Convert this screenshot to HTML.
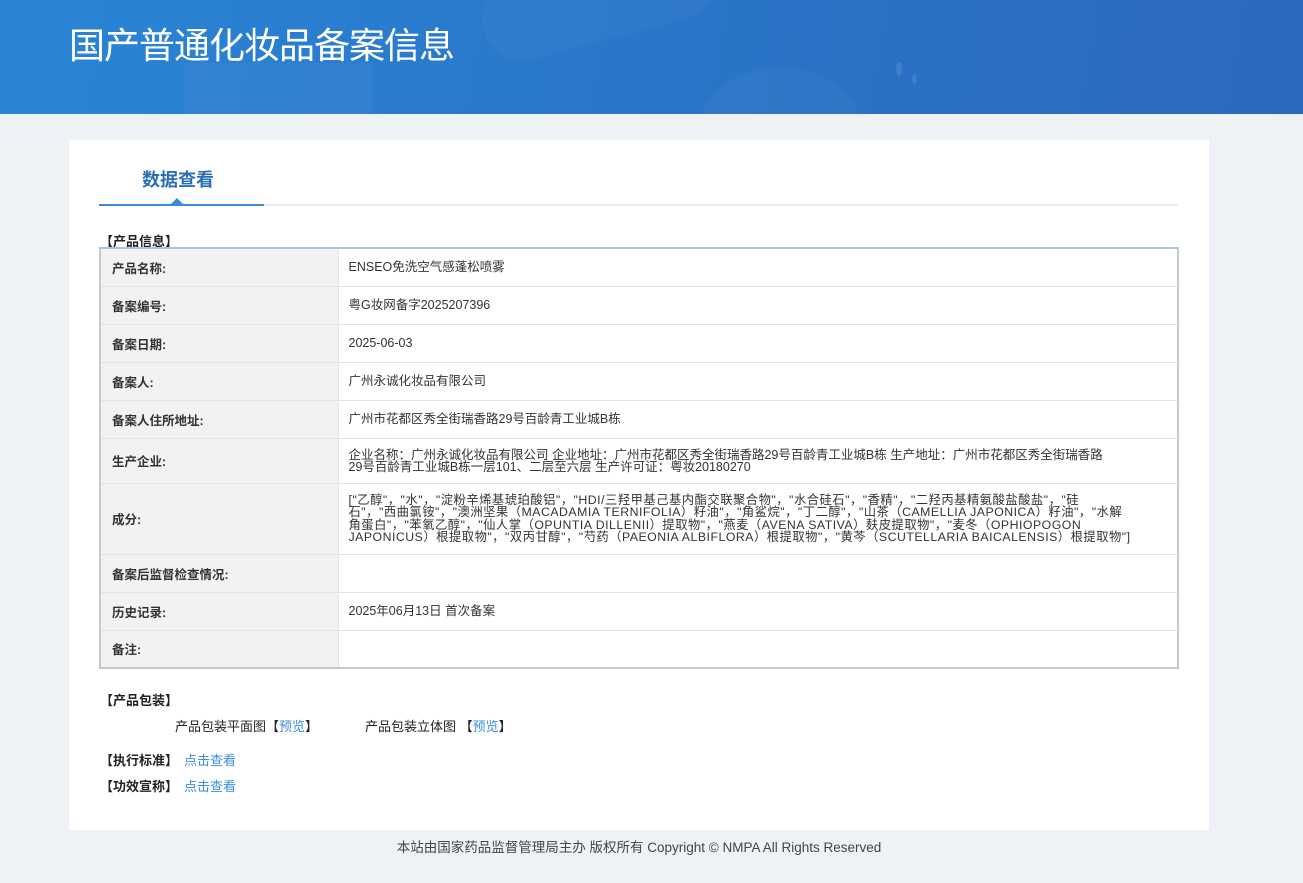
<!DOCTYPE html>
<html><head><meta charset="utf-8">
<style>
*{margin:0;padding:0;box-sizing:border-box}
body{width:1303px;height:883px;background:#eef1f5;font-family:"Liberation Sans","Noto Sans CJK SC",sans-serif;font-size:12px;color:#333;position:relative;overflow:hidden}
.hd{position:absolute;left:0;top:0;width:1303px;height:114px;background:linear-gradient(100deg,#2a86d4 0%,#2a78cc 40%,#2b69be 100%);overflow:hidden}
.hd .s1{position:absolute;left:184px;top:63px;width:188px;height:60px;background:#3f85d8;opacity:.45}
.hd .c1{position:absolute;left:480px;top:-40px;width:240px;height:80px;border-radius:40px;background:rgba(255,255,255,.03);transform:rotate(-15deg)}
.hd .c2{position:absolute;left:700px;top:68px;width:160px;height:120px;border-radius:50%;background:rgba(255,255,255,.03)}
.hd .d1{position:absolute;left:896px;top:62px;width:6px;height:14px;border-radius:50%;background:rgba(255,255,255,.1)}
.hd .d2{position:absolute;left:912px;top:74px;width:5px;height:10px;border-radius:50%;background:rgba(255,255,255,.1)}
.hd h1{position:absolute;left:69px;top:24px;font-size:36px;font-weight:normal;color:#fff;letter-spacing:-1px;line-height:44px;font-family:"Liberation Sans","Noto Sans CJK SC",sans-serif}
.panel{position:absolute;left:69px;top:140px;width:1140px;height:690px;background:#fff}
.tab{position:absolute;left:142px;top:166px;font-size:18px;font-weight:bold;color:#2a6eb3}
.line{position:absolute;left:99px;top:204px;width:1079px;height:2px;background:#e8ebef}
.blue{position:absolute;left:99px;top:204px;width:165px;height:2px;background:#3b8cd6}
.tri{position:absolute;left:171px;top:198px;width:0;height:0;border-left:6px solid transparent;border-right:6px solid transparent;border-bottom:6px solid #3b8cd6}
.sec{position:absolute;font-weight:bold;color:#222;font-size:13px}
table{position:absolute;left:99px;top:247px;width:1080px;border-collapse:collapse;border:2px solid #c8c8c8;border-top-color:#a9c2e6}
td{border:1px solid #e3e3e3;font-size:12.5px;vertical-align:middle}
td.l{width:238px;background:#f2f2f2;font-weight:bold;padding-left:11px;color:#333}
td.v{padding:0 20px 0 10px;color:#333;line-height:12px;white-space:nowrap}
td.ing{line-height:12.5px;font-size:12.3px;letter-spacing:0.5px}
a{color:#3a8ee0;text-decoration:none}
.foot{position:absolute;top:836px;left:0;width:1278px;text-align:center;font-size:13.5px;color:#444}
.pk{position:absolute;font-size:13px;color:#222}
</style></head><body>
<div class="hd"><div class="c1"></div><div class="s1"></div><div class="c2"></div><div class="d1"></div><div class="d2"></div><h1>国产普通化妆品备案信息</h1></div>
<div class="panel"></div>
<div class="tab">数据查看</div>
<div class="line"></div><div class="blue"></div><div class="tri"></div>
<div class="sec" style="left:100px;top:231px">【产品信息】</div>
<table>
<tr style="height:38px"><td class="l">产品名称:</td><td class="v">ENSEO免洗空气感蓬松喷雾</td></tr>
<tr style="height:38px"><td class="l">备案编号:</td><td class="v">粤G妆网备字2025207396</td></tr>
<tr style="height:38px"><td class="l">备案日期:</td><td class="v">2025-06-03</td></tr>
<tr style="height:38px"><td class="l">备案人:</td><td class="v">广州永诚化妆品有限公司</td></tr>
<tr style="height:38px"><td class="l">备案人住所地址:</td><td class="v">广州市花都区秀全街瑞香路29号百龄青工业城B栋</td></tr>
<tr style="height:45px"><td class="l">生产企业:</td><td class="v">企业名称：广州永诚化妆品有限公司 企业地址：广州市花都区秀全街瑞香路29号百龄青工业城B栋 生产地址：广州市花都区秀全街瑞香路<br>29号百龄青工业城B栋一层101、二层至六层 生产许可证：粤妆20180270</td></tr>
<tr style="height:71px"><td class="l">成分:</td><td class="v ing">["乙醇"，"水"，"淀粉辛烯基琥珀酸铝"，"HDI/三羟甲基己基内酯交联聚合物"，"水合硅石"，"香精"，"二羟丙基精氨酸盐酸盐"，"硅<br>石"，"西曲氯铵"，"澳洲坚果（MACADAMIA TERNIFOLIA）籽油"，"角鲨烷"，"丁二醇"，"山茶（CAMELLIA JAPONICA）籽油"，"水解<br>角蛋白"，"苯氧乙醇"，"仙人掌（OPUNTIA DILLENII）提取物"，"燕麦（AVENA SATIVA）麸皮提取物"，"麦冬（OPHIOPOGON<br>JAPONICUS）根提取物"，"双丙甘醇"，"芍药（PAEONIA ALBIFLORA）根提取物"，"黄芩（SCUTELLARIA BAICALENSIS）根提取物"]</td></tr>
<tr style="height:38px"><td class="l">备案后监督检查情况:</td><td class="v"></td></tr>
<tr style="height:38px"><td class="l">历史记录:</td><td class="v">2025年06月13日 首次备案</td></tr>
<tr style="height:38px"><td class="l">备注:</td><td class="v"></td></tr>
</table>
<div class="sec" style="left:100px;top:690px">【产品包装】</div>
<div class="pk" style="left:175px;top:716px">产品包装平面图【<a>预览</a>】</div>
<div class="pk" style="left:365px;top:716px">产品包装立体图 【<a>预览</a>】</div>
<div class="sec" style="left:100px;top:750px">【执行标准】</div><a class="pk" style="left:184px;top:750px;color:#3a8ee0">点击查看</a>
<div class="sec" style="left:100px;top:776px">【功效宣称】</div><a class="pk" style="left:184px;top:776px;color:#3a8ee0">点击查看</a>
<div class="foot">本站由国家药品监督管理局主办 版权所有 Copyright © NMPA All Rights Reserved</div>
</body></html>
